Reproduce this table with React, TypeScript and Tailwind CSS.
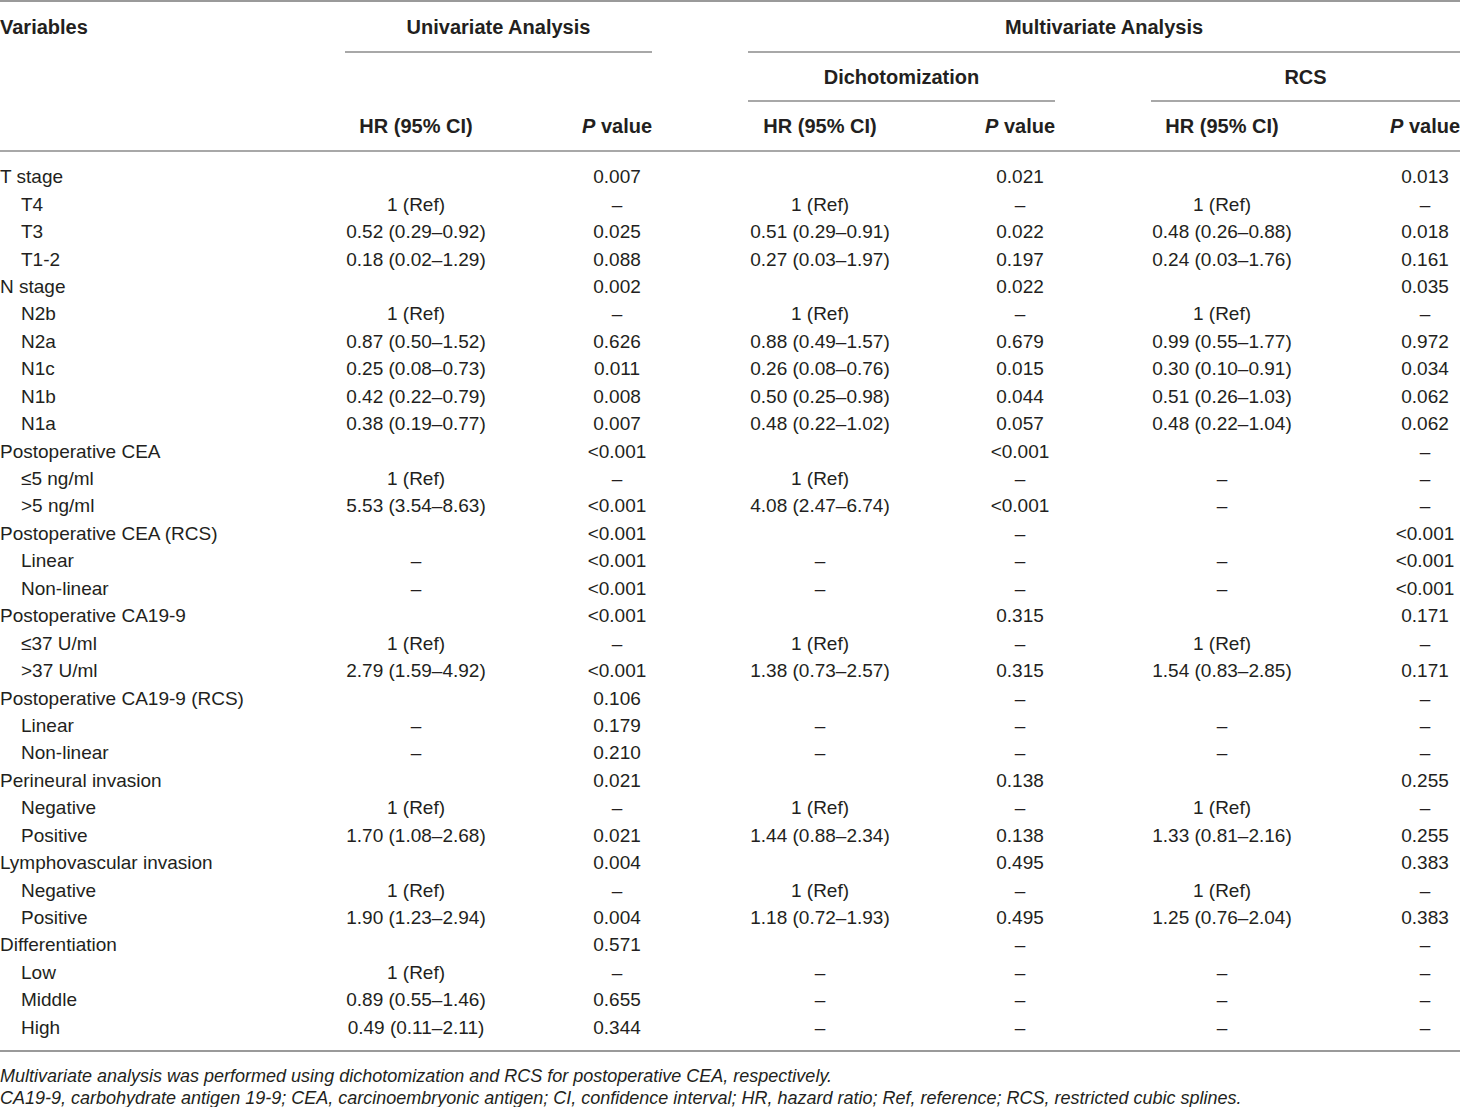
import React from "react";

type Row = [string, boolean, string, string, string, string, string, string];

const D = "\u2013";
const R = "1 (Ref)";

const rows: Row[] = [
  ["T stage", false, "", "0.007", "", "0.021", "", "0.013"],
  ["T4", true, R, D, R, D, R, D],
  ["T3", true, "0.52 (0.29\u20130.92)", "0.025", "0.51 (0.29\u20130.91)", "0.022", "0.48 (0.26\u20130.88)", "0.018"],
  ["T1-2", true, "0.18 (0.02\u20131.29)", "0.088", "0.27 (0.03\u20131.97)", "0.197", "0.24 (0.03\u20131.76)", "0.161"],
  ["N stage", false, "", "0.002", "", "0.022", "", "0.035"],
  ["N2b", true, R, D, R, D, R, D],
  ["N2a", true, "0.87 (0.50\u20131.52)", "0.626", "0.88 (0.49\u20131.57)", "0.679", "0.99 (0.55\u20131.77)", "0.972"],
  ["N1c", true, "0.25 (0.08\u20130.73)", "0.011", "0.26 (0.08\u20130.76)", "0.015", "0.30 (0.10\u20130.91)", "0.034"],
  ["N1b", true, "0.42 (0.22\u20130.79)", "0.008", "0.50 (0.25\u20130.98)", "0.044", "0.51 (0.26\u20131.03)", "0.062"],
  ["N1a", true, "0.38 (0.19\u20130.77)", "0.007", "0.48 (0.22\u20131.02)", "0.057", "0.48 (0.22\u20131.04)", "0.062"],
  ["Postoperative CEA", false, "", "<0.001", "", "<0.001", "", D],
  ["\u22645 ng/ml", true, R, D, R, D, D, D],
  [">5 ng/ml", true, "5.53 (3.54\u20138.63)", "<0.001", "4.08 (2.47\u20136.74)", "<0.001", D, D],
  ["Postoperative CEA (RCS)", false, "", "<0.001", "", D, "", "<0.001"],
  ["Linear", true, D, "<0.001", D, D, D, "<0.001"],
  ["Non-linear", true, D, "<0.001", D, D, D, "<0.001"],
  ["Postoperative CA19-9", false, "", "<0.001", "", "0.315", "", "0.171"],
  ["\u226437 U/ml", true, R, D, R, D, R, D],
  [">37 U/ml", true, "2.79 (1.59\u20134.92)", "<0.001", "1.38 (0.73\u20132.57)", "0.315", "1.54 (0.83\u20132.85)", "0.171"],
  ["Postoperative CA19-9 (RCS)", false, "", "0.106", "", D, "", D],
  ["Linear", true, D, "0.179", D, D, D, D],
  ["Non-linear", true, D, "0.210", D, D, D, D],
  ["Perineural invasion", false, "", "0.021", "", "0.138", "", "0.255"],
  ["Negative", true, R, D, R, D, R, D],
  ["Positive", true, "1.70 (1.08\u20132.68)", "0.021", "1.44 (0.88\u20132.34)", "0.138", "1.33 (0.81\u20132.16)", "0.255"],
  ["Lymphovascular invasion", false, "", "0.004", "", "0.495", "", "0.383"],
  ["Negative", true, R, D, R, D, R, D],
  ["Positive", true, "1.90 (1.23\u20132.94)", "0.004", "1.18 (0.72\u20131.93)", "0.495", "1.25 (0.76\u20132.04)", "0.383"],
  ["Differentiation", false, "", "0.571", "", D, "", D],
  ["Low", true, R, D, D, D, D, D],
  ["Middle", true, "0.89 (0.55\u20131.46)", "0.655", D, D, D, D],
  ["High", true, "0.49 (0.11\u20132.11)", "0.344", D, D, D, D],
];

const GRID =
  "grid grid-cols-[345px_142px_95px_70px_96px_144px_93px_70px_96px_142px_97px_70px]";

function PVal() {
  return (
    <span className="whitespace-nowrap">
      <i>P</i> value
    </span>
  );
}

export default function App() {
  return (
    <div
      className="w-[1460px] bg-white text-[#231f20] text-[19px]"
      style={{ fontFamily: '"Liberation Sans", Arial, sans-serif' }}
    >
      <div className="h-[2px] bg-[#9a9a9a]" />
      {/* header row 1 */}
      <div className={`${GRID} h-[49px] items-center font-bold leading-none text-[20px]`}>
        <div className="col-start-1 whitespace-nowrap">Variables</div>
        <div className="col-start-2 col-span-3 text-center">Univariate Analysis</div>
        <div className="col-start-6 col-span-7 text-center">Multivariate Analysis</div>
      </div>
      <div className={`${GRID} h-[2px]`}>
        <div className="col-start-2 col-span-3 bg-[#a8a8a8]" />
        <div className="col-start-6 col-span-7 bg-[#a8a8a8]" />
      </div>
      {/* header row 2 */}
      <div className={`${GRID} h-[47px] items-center font-bold leading-none text-[20px]`}>
        <div className="col-start-6 col-span-3 text-center">Dichotomization</div>
        <div className="col-start-10 col-span-3 text-center">RCS</div>
      </div>
      <div className={`${GRID} h-[2px]`}>
        <div className="col-start-6 col-span-3 bg-[#a8a8a8]" />
        <div className="col-start-10 col-span-3 bg-[#a8a8a8]" />
      </div>
      {/* header row 3 */}
      <div className={`${GRID} h-[48px] items-center font-bold leading-none text-[20px]`}>
        <div className="col-start-2 text-center whitespace-nowrap">HR (95% CI)</div>
        <div className="col-start-4 flex justify-center">
          <PVal />
        </div>
        <div className="col-start-6 text-center whitespace-nowrap">HR (95% CI)</div>
        <div className="col-start-8 flex justify-center">
          <PVal />
        </div>
        <div className="col-start-10 text-center whitespace-nowrap">HR (95% CI)</div>
        <div className="col-start-12 flex justify-center">
          <PVal />
        </div>
      </div>
      <div className="h-[2px] bg-[#a8a8a8]" />
      {/* body */}
      <div className="pt-[11px] pb-[9px]">
        {rows.map((r, i) => (
          <div key={i} className={`${GRID} h-[27.45px] items-center leading-none`}>
            <div className={`col-start-1 whitespace-nowrap ${r[1] ? "pl-[21px]" : ""}`}>{r[0]}</div>
            <div className="col-start-2 text-center whitespace-nowrap">{r[2]}</div>
            <div className="col-start-4 text-center whitespace-nowrap">{r[3]}</div>
            <div className="col-start-6 text-center whitespace-nowrap">{r[4]}</div>
            <div className="col-start-8 text-center whitespace-nowrap">{r[5]}</div>
            <div className="col-start-10 text-center whitespace-nowrap">{r[6]}</div>
            <div className="col-start-12 text-center whitespace-nowrap">{r[7]}</div>
          </div>
        ))}
      </div>
      <div className="h-[2px] bg-[#9a9a9a]" />
      <div className="pt-[13px] italic text-[18px] leading-[22px]">
        <p className="whitespace-nowrap">
          Multivariate analysis was performed using dichotomization and RCS for postoperative CEA, respectively.
        </p>
        <p className="whitespace-nowrap">
          CA19-9, carbohydrate antigen 19-9; CEA, carcinoembryonic antigen; CI, confidence interval; HR, hazard
          ratio; Ref, reference; RCS, restricted cubic splines.
        </p>
      </div>
    </div>
  );
}
